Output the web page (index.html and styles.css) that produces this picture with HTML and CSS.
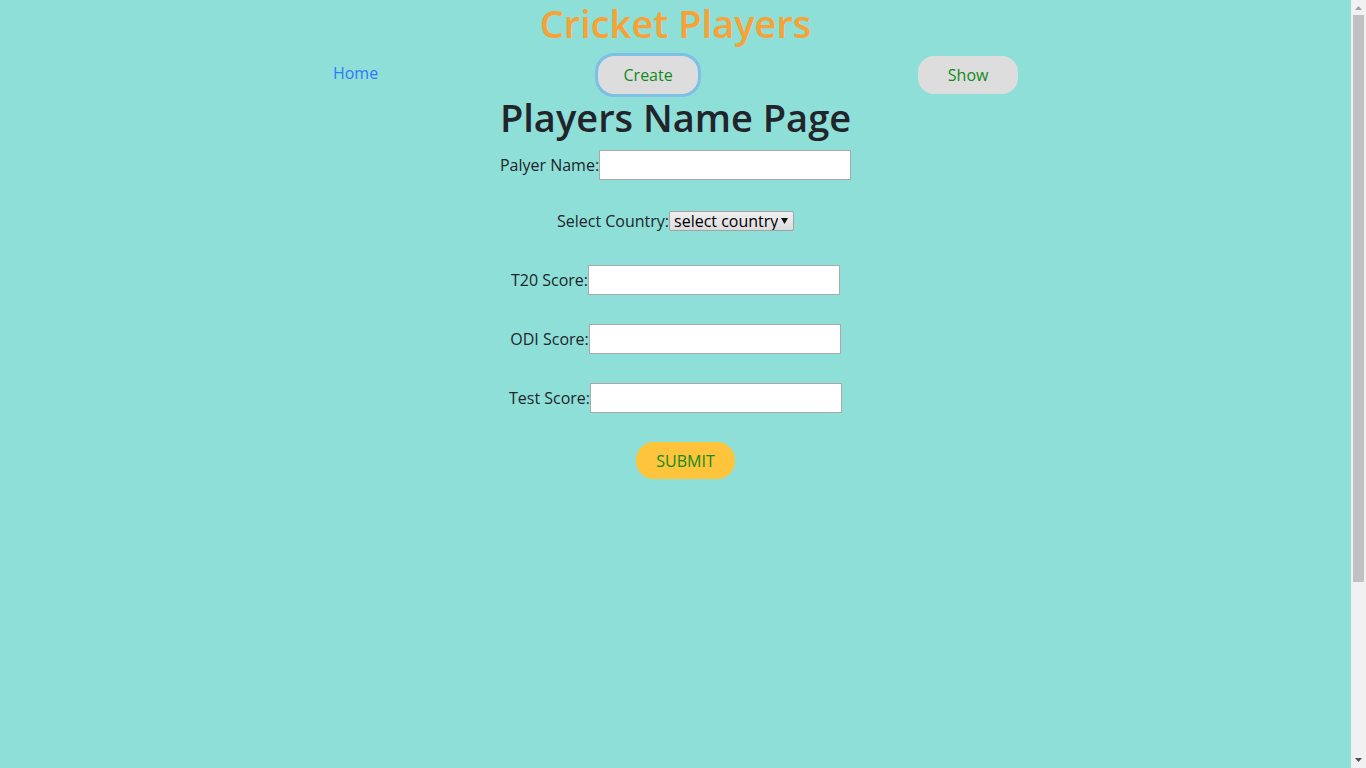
FILE: index.html
```html
<!DOCTYPE html>
<html lang="en">
<head>
<meta charset="utf-8">
<title>Cricket Players</title>
<link rel="stylesheet" href="styles.css">
</head>
<body>
<div class="page">
  <h1 class="site-title">Cricket Players</h1>
  <nav class="nav">
    <a class="nav-link" href="#">Home</a>
    <button class="nav-btn nav-btn-focus" type="button">Create</button>
    <button class="nav-btn" type="button">Show</button>
  </nav>
  <h1 class="page-title">Players Name Page</h1>
  <form class="player-form">
    <div class="row row-name">
      <label class="lbl">Palyer Name:</label><input class="field" type="text">
    </div>
    <div class="row row-country">
      <label class="lbl">Select Country:</label><span class="select-wrap"><select class="select"><option>select country</option></select><svg class="select-arrow" width="7" height="6" viewBox="0 0 7 6"><path d="M0 0 H7 L3.5 6 Z" fill="#111"/></svg></span>
    </div>
    <div class="row row-t20">
      <label class="lbl">T20 Score:</label><input class="field" type="text">
    </div>
    <div class="row row-score">
      <label class="lbl">ODI Score:</label><input class="field" type="text">
    </div>
    <div class="row row-score">
      <label class="lbl">Test Score:</label><input class="field" type="text">
    </div>
    <div class="row row-submit">
      <button class="submit" type="button">SUBMIT</button>
    </div>
  </form>
</div>
<div class="scrollbar">
  <div class="sb-btn"><svg width="7" height="4" viewBox="0 0 7 4"><path d="M3.5 0 L7 4 H0 Z" fill="#a3a3a3"/></svg></div>
  <div class="sb-track"><div class="sb-thumb"></div></div>
  <div class="sb-btn sb-btn-down"><svg width="7" height="4" viewBox="0 0 7 4"><path d="M0 0 H7 L3.5 4 Z" fill="#505050"/></svg></div>
</div>
</body>
</html>
```
FILE: styles.css
```css
html, body {
  margin: 0;
  padding: 0;
  height: 768px;
  overflow: hidden;
}
body {
  background: #8fdfd9;
  font-family: "Open Sans", "Noto Sans", sans-serif;
  color: #212529;
  font-size: 16px;
  display: flex;
}
.page {
  flex: 1;
  display: flex;
  flex-direction: column;
  align-items: center;
}
.site-title {
  margin: 0;
  height: 48px;
  line-height: 46px;
  font-size: 38px;
  font-weight: 600;
  color: #f8a236;
  text-align: center;
}
.nav {
  margin-top: 8px;
  display: flex;
  align-items: center;
  justify-content: center;
  gap: 220px;
  height: 38px;
}
.nav-link {
  color: #2f78f6;
  text-decoration: none;
  font-size: 16px;
  position: relative;
  top: -2px;
}
.nav-btn {
  width: 100px;
  height: 38px;
  border: none;
  border-radius: 16px;
  background: #dddddd;
  color: #118a1a;
  font-family: inherit;
  font-size: 16px;
  padding: 0;
}
.nav-btn-focus {
  outline: 3px solid #80bfe6;
  outline-offset: 0;
}
.page-title {
  margin: 0;
  height: 48px;
  line-height: 46px;
  font-size: 38px;
  font-weight: 600;
  color: #212529;
  text-align: center;
}
.player-form {
  margin-top: 8px;
  display: flex;
  flex-direction: column;
  align-items: center;
}
.row {
  display: flex;
  align-items: center;
  justify-content: center;
}
.lbl {
  font-size: 16px;
  line-height: 22px;
  color: #212529;
}
.field {
  box-sizing: border-box;
  width: 252px;
  height: 30px;
  border: 1px solid #a9a9a9;
  background: #fff;
  margin: 0;
  padding: 0 4px;
}
.row-name { margin-top: 0; }
.row-country { margin-top: 30px; }
.row-t20 { margin-top: 33px; }
.row-score { margin-top: 29px; }
.select-wrap {
  box-sizing: border-box;
  display: inline-flex;
  align-items: center;
  height: 20px;
  width: 125px;
  border: 1px solid #a3a3a3;
  border-radius: 2px;
  background: linear-gradient(#efefef, #dcdcdc);
  padding: 0 5px 0 4px;
}
.select {
  appearance: none;
  -webkit-appearance: none;
  border: none;
  background: transparent;
  font-family: inherit;
  font-size: 16px;
  color: #000;
  padding: 0;
  margin: 0;
  width: 104px;
  height: 18px;
  line-height: 18px;
}
.select-arrow {
  flex: none;
  margin-left: auto;
}
.row-submit {
  margin-top: 29px;
  padding-left: 20px;
}
.submit {
  width: 99px;
  height: 37px;
  border: none;
  border-radius: 18px;
  background: #fec43c;
  color: #118a1a;
  font-family: inherit;
  font-size: 16px;
  padding: 0;
}
.scrollbar {
  flex: none;
  width: 15px;
  height: 768px;
  background: #f1f1f1;
  display: flex;
  flex-direction: column;
}
.sb-btn {
  height: 15px;
  display: flex;
  align-items: center;
  justify-content: center;
}
.sb-btn svg {
  display: block;
}
.sb-track {
  flex: 1;
}
.sb-thumb {
  margin-left: 2px;
  width: 11px;
  height: 567px;
  background: #c1c1c1;
}
.sb-btn-down {
  align-items: flex-start;
  padding-top: 5px;
  height: 10px;
}
```
